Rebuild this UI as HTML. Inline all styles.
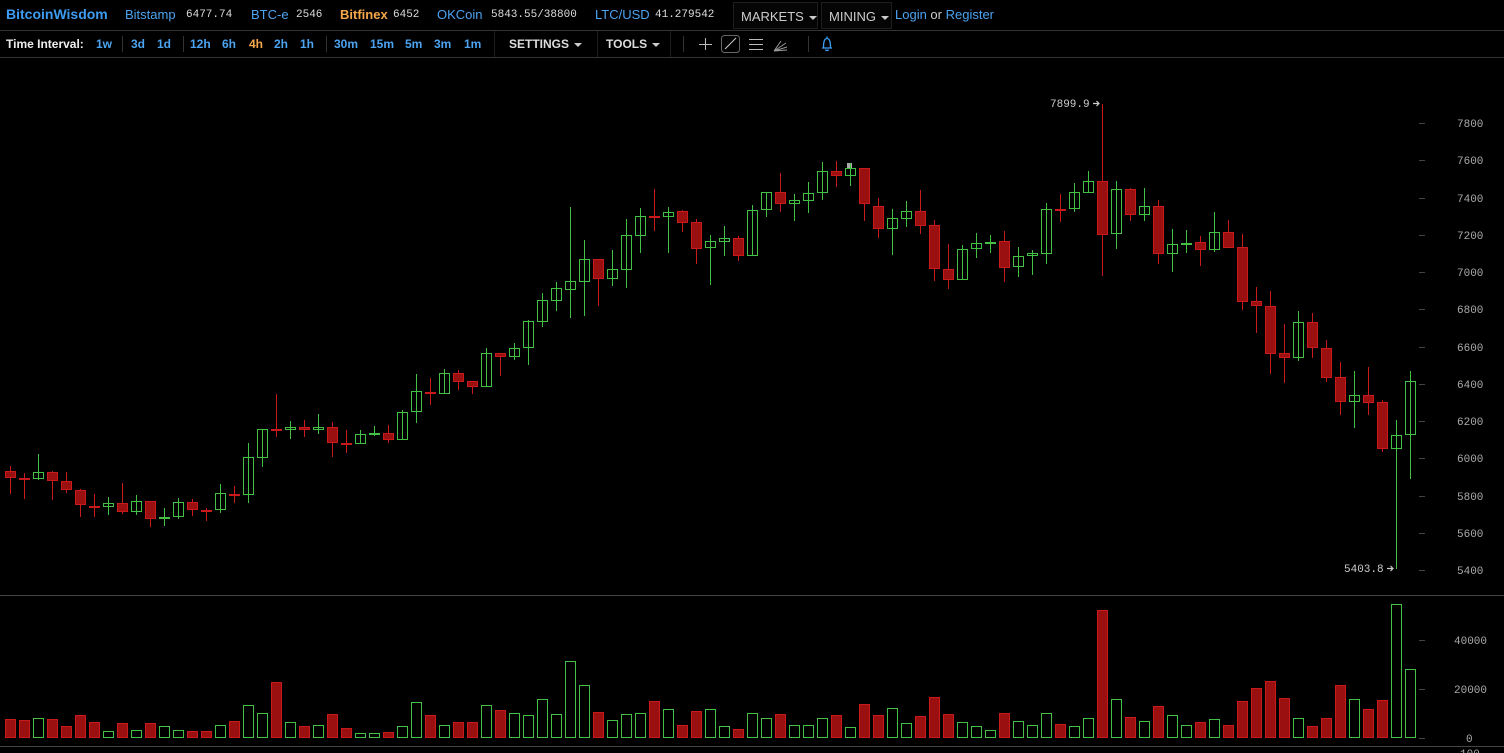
<!DOCTYPE html>
<html><head><meta charset="utf-8"><style>
*{margin:0;padding:0;box-sizing:border-box}
body{width:1504px;height:753px;background:#000;overflow:hidden;position:relative;font-family:"Liberation Sans",Arial,sans-serif;}
.a{position:absolute;white-space:nowrap}
.t1{top:7px;font-size:13px;color:#4ca3f0}
.m{font-family:"Liberation Mono",monospace;font-size:11px;color:#ddd;top:9px}
.t2{top:37px;font-size:12px;font-weight:bold;color:#4ca3f0}
.sep{position:absolute;width:1px;background:#333}
.dd{position:absolute;top:2px;height:27px;border:1px solid #1e1e1e;background:#050505;color:#ccc;font-size:13px;padding:6px 0 0 7px;white-space:nowrap}
.car{display:inline-block;width:0;height:0;border-left:4px solid transparent;border-right:4px solid transparent;border-top:4px solid #ccc;vertical-align:middle;margin-left:5px}
svg{position:absolute;left:0;top:0}
.r line,.r rect{stroke:#c81a1a}
.r rect{fill:#9a1010}
.g line,.g rect{stroke:#44c044}
.g rect{fill:none}
.ax{font-family:"Liberation Mono",monospace;font-size:11px;fill:#aaa}
</style></head><body>
<div class="a" style="left:0;top:30px;width:1504px;height:1px;background:#333"></div>
<div class="a" style="left:0;top:57px;width:1504px;height:1px;background:#333"></div>

<div class="a" style="left:6px;top:6px;font-size:14px;font-weight:bold;color:#3d9cf0">BitcoinWisdom</div>
<div class="a t1" style="left:125px">Bitstamp</div><div class="a m" style="left:186px">6477.74</div>
<div class="a t1" style="left:251px">BTC-e</div><div class="a m" style="left:296px">2546</div>
<div class="a t1" style="left:340px;color:#f5a64a;font-weight:bold">Bitfinex</div><div class="a m" style="left:393px">6452</div>
<div class="a t1" style="left:437px">OKCoin</div><div class="a m" style="left:491px">5843.55/38800</div>
<div class="a t1" style="left:595px">LTC/USD</div><div class="a m" style="left:655px">41.279542</div>
<div class="dd" style="left:733px;width:85px">MARKETS<span class="car"></span></div>
<div class="dd" style="left:821px;width:71px">MINING<span class="car"></span></div>
<div class="a t1" style="left:895px">Login <span style="color:#ccc">or</span> Register</div>

<div class="a t2" style="left:6px;color:#eee">Time Interval:</div>
<div class="a t2" style="left:96px">1w</div>
<div class="sep" style="left:122px;top:36px;height:16px"></div>
<div class="a t2" style="left:131px">3d</div>
<div class="a t2" style="left:157px">1d</div>
<div class="sep" style="left:183px;top:36px;height:16px"></div>
<div class="a t2" style="left:190px">12h</div>
<div class="a t2" style="left:222px">6h</div>
<div class="a t2" style="left:249px;color:#f5a64a">4h</div>
<div class="a t2" style="left:274px">2h</div>
<div class="a t2" style="left:300px">1h</div>
<div class="sep" style="left:326px;top:36px;height:16px"></div>
<div class="a t2" style="left:334px">30m</div>
<div class="a t2" style="left:370px">15m</div>
<div class="a t2" style="left:405px">5m</div>
<div class="a t2" style="left:434px">3m</div>
<div class="a t2" style="left:464px">1m</div>
<div class="sep" style="left:494px;top:31px;height:26px;background:#1e1e1e"></div>
<div class="a t2" style="left:509px;color:#ddd">SETTINGS<span class="car"></span></div>
<div class="sep" style="left:597px;top:31px;height:26px;background:#1e1e1e"></div>
<div class="a t2" style="left:606px;color:#ddd">TOOLS<span class="car"></span></div>
<div class="sep" style="left:670px;top:31px;height:26px;background:#1e1e1e"></div>
<div class="sep" style="left:683px;top:36px;height:16px"></div>
<div class="sep" style="left:808px;top:36px;height:16px"></div>

<svg width="1504" height="753" viewBox="0 0 1504 753">
<g stroke="#bbb" stroke-width="1" fill="none">
<path d="M705.5 38v12M699 44.5h13"/>
<rect x="721.5" y="35.5" width="18" height="17" rx="3" stroke="#666"/>
<path d="M725 49l11-11" stroke="#ccc"/>
<path d="M749 39.5h14M749 44.5h14M749 49.5h14"/>
<path d="M774 51l12-8M774 51l13-4M774 51l13-1M774 51l7-10" stroke="#999"/>
</g>
<path d="M822 48h10M823.5 47.5c0-3 0-9 3.5-9s3.5 6 3.5 9M825.5 49.5a1.6 1.6 0 0 0 3 0M827 36.5v2" stroke="#3d9cf0" stroke-width="1.3" fill="none"/>

<line x1="0" y1="595.5" x2="1504" y2="595.5" stroke="#444"/>
<line x1="0" y1="746.5" x2="1504" y2="746.5" stroke="#444"/>
<g stroke="#444">
<path d="M1419 123.5h6M1419 160.5h6M1419 198.5h6M1419 235.5h6M1419 272.5h6M1419 309.5h6M1419 347.5h6M1419 384.5h6M1419 421.5h6M1419 458.5h6M1419 496.5h6M1419 533.5h6M1419 570.5h6M1419 640.5h6M1419 689.5h6M1419 738.5h6"/>
</g>
<g class="ax">
<text x="1457" y="127">7800</text><text x="1457" y="164">7600</text><text x="1457" y="202">7400</text><text x="1457" y="239">7200</text><text x="1457" y="276">7000</text><text x="1457" y="313">6800</text><text x="1457" y="351">6600</text><text x="1457" y="388">6400</text><text x="1457" y="425">6200</text><text x="1457" y="462">6000</text><text x="1457" y="500">5800</text><text x="1457" y="537">5600</text><text x="1457" y="574">5400</text>
<text x="1454" y="644">40000</text><text x="1454" y="693">20000</text><text x="1466" y="742">0</text><text x="1460" y="757">100</text>
<text x="1050" y="107" fill="#ccc">7899.9</text>
<text x="1344" y="572" fill="#ccc">5403.8</text>
</g>
<g stroke="#ccc" fill="none" stroke-width="1.2">
<path d="M1093 103.5h6M1096.5 101l2.5 2.5-2.5 2.5"/>
<path d="M1387 568.5h6M1390.5 566l2.5 2.5-2.5 2.5"/>
</g>
<rect x="847" y="163" width="5" height="5" fill="#aaa"/>

<g class="r" transform="translate(0,0)"><line x1="10.5" x2="10.5" y1="466" y2="494"/><rect x="5.5" y="471.5" width="10" height="6"/></g>
<g class="r" transform="translate(14,0)"><line x1="10.5" x2="10.5" y1="473" y2="499"/><rect x="5.5" y="478.5" width="10" height="1"/></g>
<g class="g" transform="translate(28,0)"><line x1="10.5" x2="10.5" y1="454" y2="480"/><rect x="5.5" y="472.5" width="10" height="6"/></g>
<g class="r" transform="translate(42,0)"><line x1="10.5" x2="10.5" y1="471" y2="500"/><rect x="5.5" y="472.5" width="10" height="8"/></g>
<g class="r" transform="translate(56,0)"><line x1="10.5" x2="10.5" y1="472" y2="493"/><rect x="5.5" y="481.5" width="10" height="8"/></g>
<g class="r" transform="translate(70,0)"><line x1="10.5" x2="10.5" y1="489" y2="517"/><rect x="5.5" y="490.5" width="10" height="14"/></g>
<g class="r" transform="translate(84,0)"><line x1="10.5" x2="10.5" y1="494" y2="517"/><rect x="5.5" y="506.5" width="10" height="1"/></g>
<g class="g" transform="translate(98,0)"><line x1="10.5" x2="10.5" y1="497" y2="515"/><rect x="5.5" y="503.5" width="10" height="3"/></g>
<g class="r" transform="translate(112,0)"><line x1="10.5" x2="10.5" y1="483" y2="514"/><rect x="5.5" y="503.5" width="10" height="8"/></g>
<g class="g" transform="translate(126,0)"><line x1="10.5" x2="10.5" y1="495" y2="515"/><rect x="5.5" y="501.5" width="10" height="10"/></g>
<g class="r" transform="translate(140,0)"><line x1="10.5" x2="10.5" y1="501" y2="527"/><rect x="5.5" y="501.5" width="10" height="17"/></g>
<g class="g" transform="translate(154,0)"><line x1="10.5" x2="10.5" y1="508" y2="526"/><rect x="5.5" y="517.5" width="10" height="1"/></g>
<g class="g" transform="translate(168,0)"><line x1="10.5" x2="10.5" y1="498" y2="519"/><rect x="5.5" y="502.5" width="10" height="14"/></g>
<g class="r" transform="translate(182,0)"><line x1="10.5" x2="10.5" y1="499" y2="516"/><rect x="5.5" y="502.5" width="10" height="7"/></g>
<g class="r" transform="translate(196,0)"><line x1="10.5" x2="10.5" y1="508" y2="521"/><rect x="5.5" y="510.5" width="10" height="1"/></g>
<g class="g" transform="translate(210,0)"><line x1="10.5" x2="10.5" y1="484" y2="513"/><rect x="5.5" y="493.5" width="10" height="16"/></g>
<g class="r" transform="translate(224,0)"><line x1="10.5" x2="10.5" y1="486" y2="503"/><rect x="5.5" y="494.5" width="10" height="1"/></g>
<g class="g" transform="translate(238,0)"><line x1="10.5" x2="10.5" y1="443" y2="503"/><rect x="5.5" y="457.5" width="10" height="37"/></g>
<g class="g" transform="translate(252,0)"><line x1="10.5" x2="10.5" y1="429" y2="467"/><rect x="5.5" y="429.5" width="10" height="28"/></g>
<g class="r" transform="translate(266,0)"><line x1="10.5" x2="10.5" y1="394" y2="437"/><rect x="5.5" y="429.5" width="10" height="1"/></g>
<g class="g" transform="translate(280,0)"><line x1="10.5" x2="10.5" y1="421" y2="439"/><rect x="5.5" y="427.5" width="10" height="2"/></g>
<g class="r" transform="translate(294,0)"><line x1="10.5" x2="10.5" y1="420" y2="437"/><rect x="5.5" y="427.5" width="10" height="2"/></g>
<g class="g" transform="translate(308,0)"><line x1="10.5" x2="10.5" y1="414" y2="434"/><rect x="5.5" y="427.5" width="10" height="2"/></g>
<g class="r" transform="translate(322,0)"><line x1="10.5" x2="10.5" y1="422" y2="457"/><rect x="5.5" y="427.5" width="10" height="15"/></g>
<g class="r" transform="translate(336,0)"><line x1="10.5" x2="10.5" y1="430" y2="453"/><rect x="5.5" y="443.5" width="10" height="1"/></g>
<g class="g" transform="translate(350,0)"><line x1="10.5" x2="10.5" y1="430" y2="443"/><rect x="5.5" y="434.5" width="10" height="9"/></g>
<g class="g" transform="translate(364,0)"><line x1="10.5" x2="10.5" y1="426" y2="436"/><rect x="5.5" y="433.5" width="10" height="1"/></g>
<g class="r" transform="translate(378,0)"><line x1="10.5" x2="10.5" y1="425" y2="443"/><rect x="5.5" y="433.5" width="10" height="6"/></g>
<g class="g" transform="translate(392,0)"><line x1="10.5" x2="10.5" y1="410" y2="440"/><rect x="5.5" y="412.5" width="10" height="27"/></g>
<g class="g" transform="translate(406,0)"><line x1="10.5" x2="10.5" y1="374" y2="423"/><rect x="5.5" y="391.5" width="10" height="20"/></g>
<g class="r" transform="translate(420,0)"><line x1="10.5" x2="10.5" y1="378" y2="405"/><rect x="5.5" y="392.5" width="10" height="1"/></g>
<g class="g" transform="translate(434,0)"><line x1="10.5" x2="10.5" y1="369" y2="394"/><rect x="5.5" y="373.5" width="10" height="20"/></g>
<g class="r" transform="translate(448,0)"><line x1="10.5" x2="10.5" y1="370" y2="390"/><rect x="5.5" y="373.5" width="10" height="8"/></g>
<g class="r" transform="translate(462,0)"><line x1="10.5" x2="10.5" y1="381" y2="394"/><rect x="5.5" y="381.5" width="10" height="5"/></g>
<g class="g" transform="translate(476,0)"><line x1="10.5" x2="10.5" y1="348" y2="386"/><rect x="5.5" y="353.5" width="10" height="33"/></g>
<g class="r" transform="translate(490,0)"><line x1="10.5" x2="10.5" y1="353" y2="376"/><rect x="5.5" y="353.5" width="10" height="3"/></g>
<g class="g" transform="translate(504,0)"><line x1="10.5" x2="10.5" y1="343" y2="360"/><rect x="5.5" y="348.5" width="10" height="8"/></g>
<g class="g" transform="translate(518,0)"><line x1="10.5" x2="10.5" y1="320" y2="365"/><rect x="5.5" y="321.5" width="10" height="26"/></g>
<g class="g" transform="translate(532,0)"><line x1="10.5" x2="10.5" y1="293" y2="327"/><rect x="5.5" y="300.5" width="10" height="21"/></g>
<g class="g" transform="translate(546,0)"><line x1="10.5" x2="10.5" y1="282" y2="311"/><rect x="5.5" y="288.5" width="10" height="12"/></g>
<g class="g" transform="translate(560,0)"><line x1="10.5" x2="10.5" y1="207" y2="318"/><rect x="5.5" y="281.5" width="10" height="8"/></g>
<g class="g" transform="translate(574,0)"><line x1="10.5" x2="10.5" y1="240" y2="316"/><rect x="5.5" y="259.5" width="10" height="22"/></g>
<g class="r" transform="translate(588,0)"><line x1="10.5" x2="10.5" y1="259" y2="306"/><rect x="5.5" y="259.5" width="10" height="19"/></g>
<g class="g" transform="translate(602,0)"><line x1="10.5" x2="10.5" y1="250" y2="286"/><rect x="5.5" y="269.5" width="10" height="9"/></g>
<g class="g" transform="translate(616,0)"><line x1="10.5" x2="10.5" y1="219" y2="288"/><rect x="5.5" y="235.5" width="10" height="34"/></g>
<g class="g" transform="translate(630,0)"><line x1="10.5" x2="10.5" y1="208" y2="253"/><rect x="5.5" y="216.5" width="10" height="19"/></g>
<g class="r" transform="translate(644,0)"><line x1="10.5" x2="10.5" y1="189" y2="231"/><rect x="5.5" y="216.5" width="10" height="1"/></g>
<g class="g" transform="translate(658,0)"><line x1="10.5" x2="10.5" y1="207" y2="253"/><rect x="5.5" y="212.5" width="10" height="4"/></g>
<g class="r" transform="translate(672,0)"><line x1="10.5" x2="10.5" y1="210" y2="232"/><rect x="5.5" y="211.5" width="10" height="11"/></g>
<g class="r" transform="translate(686,0)"><line x1="10.5" x2="10.5" y1="219" y2="264"/><rect x="5.5" y="222.5" width="10" height="26"/></g>
<g class="g" transform="translate(700,0)"><line x1="10.5" x2="10.5" y1="235" y2="285"/><rect x="5.5" y="241.5" width="10" height="6"/></g>
<g class="g" transform="translate(714,0)"><line x1="10.5" x2="10.5" y1="226" y2="256"/><rect x="5.5" y="238.5" width="10" height="3"/></g>
<g class="r" transform="translate(728,0)"><line x1="10.5" x2="10.5" y1="236" y2="261"/><rect x="5.5" y="238.5" width="10" height="17"/></g>
<g class="g" transform="translate(742,0)"><line x1="10.5" x2="10.5" y1="205" y2="255"/><rect x="5.5" y="210.5" width="10" height="45"/></g>
<g class="g" transform="translate(756,0)"><line x1="10.5" x2="10.5" y1="192" y2="217"/><rect x="5.5" y="192.5" width="10" height="17"/></g>
<g class="r" transform="translate(770,0)"><line x1="10.5" x2="10.5" y1="173" y2="212"/><rect x="5.5" y="192.5" width="10" height="11"/></g>
<g class="g" transform="translate(784,0)"><line x1="10.5" x2="10.5" y1="194" y2="221"/><rect x="5.5" y="200.5" width="10" height="3"/></g>
<g class="g" transform="translate(798,0)"><line x1="10.5" x2="10.5" y1="182" y2="213"/><rect x="5.5" y="193.5" width="10" height="7"/></g>
<g class="g" transform="translate(812,0)"><line x1="10.5" x2="10.5" y1="162" y2="200"/><rect x="5.5" y="171.5" width="10" height="21"/></g>
<g class="r" transform="translate(826,0)"><line x1="10.5" x2="10.5" y1="161" y2="187"/><rect x="5.5" y="171.5" width="10" height="4"/></g>
<g class="g" transform="translate(840,0)"><line x1="10.5" x2="10.5" y1="163" y2="186"/><rect x="5.5" y="168.5" width="10" height="7"/></g>
<g class="r" transform="translate(854,0)"><line x1="10.5" x2="10.5" y1="168" y2="221"/><rect x="5.5" y="168.5" width="10" height="35"/></g>
<g class="r" transform="translate(868,0)"><line x1="10.5" x2="10.5" y1="198" y2="238"/><rect x="5.5" y="206.5" width="10" height="22"/></g>
<g class="g" transform="translate(882,0)"><line x1="10.5" x2="10.5" y1="209" y2="255"/><rect x="5.5" y="218.5" width="10" height="10"/></g>
<g class="g" transform="translate(896,0)"><line x1="10.5" x2="10.5" y1="201" y2="227"/><rect x="5.5" y="211.5" width="10" height="7"/></g>
<g class="r" transform="translate(910,0)"><line x1="10.5" x2="10.5" y1="190" y2="234"/><rect x="5.5" y="211.5" width="10" height="14"/></g>
<g class="r" transform="translate(924,0)"><line x1="10.5" x2="10.5" y1="220" y2="281"/><rect x="5.5" y="225.5" width="10" height="43"/></g>
<g class="r" transform="translate(938,0)"><line x1="10.5" x2="10.5" y1="244" y2="289"/><rect x="5.5" y="269.5" width="10" height="10"/></g>
<g class="g" transform="translate(952,0)"><line x1="10.5" x2="10.5" y1="245" y2="279"/><rect x="5.5" y="249.5" width="10" height="30"/></g>
<g class="g" transform="translate(966,0)"><line x1="10.5" x2="10.5" y1="233" y2="258"/><rect x="5.5" y="243.5" width="10" height="5"/></g>
<g class="g" transform="translate(980,0)"><line x1="10.5" x2="10.5" y1="235" y2="253"/><rect x="5.5" y="242.5" width="10" height="1"/></g>
<g class="r" transform="translate(994,0)"><line x1="10.5" x2="10.5" y1="231" y2="282"/><rect x="5.5" y="241.5" width="10" height="26"/></g>
<g class="g" transform="translate(1008,0)"><line x1="10.5" x2="10.5" y1="247" y2="277"/><rect x="5.5" y="256.5" width="10" height="10"/></g>
<g class="g" transform="translate(1022,0)"><line x1="10.5" x2="10.5" y1="250" y2="275"/><rect x="5.5" y="253.5" width="10" height="2"/></g>
<g class="g" transform="translate(1036,0)"><line x1="10.5" x2="10.5" y1="203" y2="264"/><rect x="5.5" y="209.5" width="10" height="44"/></g>
<g class="r" transform="translate(1050,0)"><line x1="10.5" x2="10.5" y1="194" y2="222"/><rect x="5.5" y="209.5" width="10" height="1"/></g>
<g class="g" transform="translate(1064,0)"><line x1="10.5" x2="10.5" y1="183" y2="212"/><rect x="5.5" y="192.5" width="10" height="16"/></g>
<g class="g" transform="translate(1078,0)"><line x1="10.5" x2="10.5" y1="171" y2="193"/><rect x="5.5" y="181.5" width="10" height="11"/></g>
<g class="r" transform="translate(1092,0)"><line x1="10.5" x2="10.5" y1="104" y2="276"/><rect x="5.5" y="181.5" width="10" height="53"/></g>
<g class="g" transform="translate(1106,0)"><line x1="10.5" x2="10.5" y1="181" y2="249"/><rect x="5.5" y="189.5" width="10" height="44"/></g>
<g class="r" transform="translate(1120,0)"><line x1="10.5" x2="10.5" y1="188" y2="221"/><rect x="5.5" y="189.5" width="10" height="25"/></g>
<g class="g" transform="translate(1134,0)"><line x1="10.5" x2="10.5" y1="188" y2="221"/><rect x="5.5" y="206.5" width="10" height="8"/></g>
<g class="r" transform="translate(1148,0)"><line x1="10.5" x2="10.5" y1="200" y2="264"/><rect x="5.5" y="206.5" width="10" height="47"/></g>
<g class="g" transform="translate(1162,0)"><line x1="10.5" x2="10.5" y1="229" y2="272"/><rect x="5.5" y="244.5" width="10" height="9"/></g>
<g class="g" transform="translate(1176,0)"><line x1="10.5" x2="10.5" y1="230" y2="253"/><rect x="5.5" y="243.5" width="10" height="1"/></g>
<g class="r" transform="translate(1190,0)"><line x1="10.5" x2="10.5" y1="236" y2="266"/><rect x="5.5" y="242.5" width="10" height="7"/></g>
<g class="g" transform="translate(1204,0)"><line x1="10.5" x2="10.5" y1="212" y2="252"/><rect x="5.5" y="232.5" width="10" height="17"/></g>
<g class="r" transform="translate(1218,0)"><line x1="10.5" x2="10.5" y1="220" y2="248"/><rect x="5.5" y="232.5" width="10" height="15"/></g>
<g class="r" transform="translate(1232,0)"><line x1="10.5" x2="10.5" y1="234" y2="310"/><rect x="5.5" y="247.5" width="10" height="54"/></g>
<g class="r" transform="translate(1246,0)"><line x1="10.5" x2="10.5" y1="287" y2="333"/><rect x="5.5" y="301.5" width="10" height="4"/></g>
<g class="r" transform="translate(1260,0)"><line x1="10.5" x2="10.5" y1="291" y2="374"/><rect x="5.5" y="306.5" width="10" height="47"/></g>
<g class="r" transform="translate(1274,0)"><line x1="10.5" x2="10.5" y1="324" y2="383"/><rect x="5.5" y="353.5" width="10" height="4"/></g>
<g class="g" transform="translate(1288,0)"><line x1="10.5" x2="10.5" y1="311" y2="361"/><rect x="5.5" y="322.5" width="10" height="35"/></g>
<g class="r" transform="translate(1302,0)"><line x1="10.5" x2="10.5" y1="313" y2="358"/><rect x="5.5" y="322.5" width="10" height="25"/></g>
<g class="r" transform="translate(1316,0)"><line x1="10.5" x2="10.5" y1="340" y2="382"/><rect x="5.5" y="348.5" width="10" height="29"/></g>
<g class="r" transform="translate(1330,0)"><line x1="10.5" x2="10.5" y1="362" y2="415"/><rect x="5.5" y="377.5" width="10" height="24"/></g>
<g class="g" transform="translate(1344,0)"><line x1="10.5" x2="10.5" y1="371" y2="428"/><rect x="5.5" y="395.5" width="10" height="6"/></g>
<g class="r" transform="translate(1358,0)"><line x1="10.5" x2="10.5" y1="367" y2="415"/><rect x="5.5" y="395.5" width="10" height="7"/></g>
<g class="r" transform="translate(1372,0)"><line x1="10.5" x2="10.5" y1="400" y2="452"/><rect x="5.5" y="402.5" width="10" height="46"/></g>
<g class="g" transform="translate(1386,0)"><line x1="10.5" x2="10.5" y1="420" y2="569"/><rect x="5.5" y="435.5" width="10" height="13"/></g>
<g class="g" transform="translate(1400,0)"><line x1="10.5" x2="10.5" y1="371" y2="479"/><rect x="5.5" y="381.5" width="10" height="53"/></g>

<g class="r"><rect x="5.5" y="719.5" width="10" height="18"/><rect x="19.5" y="720.5" width="10" height="17"/><rect x="47.5" y="719.5" width="10" height="18"/><rect x="61.5" y="726.5" width="10" height="11"/><rect x="75.5" y="715.5" width="10" height="22"/><rect x="89.5" y="722.5" width="10" height="15"/><rect x="117.5" y="723.5" width="10" height="14"/><rect x="145.5" y="723.5" width="10" height="14"/><rect x="187.5" y="731.5" width="10" height="6"/><rect x="201.5" y="731.5" width="10" height="6"/><rect x="229.5" y="721.5" width="10" height="16"/><rect x="271.5" y="682.5" width="10" height="55"/><rect x="299.5" y="726.5" width="10" height="11"/><rect x="327.5" y="714.5" width="10" height="23"/><rect x="341.5" y="728.5" width="10" height="9"/><rect x="383.5" y="732.5" width="10" height="5"/><rect x="425.5" y="715.5" width="10" height="22"/><rect x="453.5" y="722.5" width="10" height="15"/><rect x="467.5" y="722.5" width="10" height="15"/><rect x="495.5" y="710.5" width="10" height="27"/><rect x="593.5" y="712.5" width="10" height="25"/><rect x="649.5" y="701.5" width="10" height="36"/><rect x="677.5" y="725.5" width="10" height="12"/><rect x="691.5" y="711.5" width="10" height="26"/><rect x="733.5" y="729.5" width="10" height="8"/><rect x="775.5" y="714.5" width="10" height="23"/><rect x="831.5" y="715.5" width="10" height="22"/><rect x="859.5" y="704.5" width="10" height="33"/><rect x="873.5" y="715.5" width="10" height="22"/><rect x="915.5" y="716.5" width="10" height="21"/><rect x="929.5" y="697.5" width="10" height="40"/><rect x="943.5" y="714.5" width="10" height="23"/><rect x="999.5" y="713.5" width="10" height="24"/><rect x="1055.5" y="724.5" width="10" height="13"/><rect x="1097.5" y="610.5" width="10" height="127"/><rect x="1125.5" y="717.5" width="10" height="20"/><rect x="1153.5" y="706.5" width="10" height="31"/><rect x="1195.5" y="722.5" width="10" height="15"/><rect x="1223.5" y="725.5" width="10" height="12"/><rect x="1237.5" y="701.5" width="10" height="36"/><rect x="1251.5" y="688.5" width="10" height="49"/><rect x="1265.5" y="681.5" width="10" height="56"/><rect x="1279.5" y="698.5" width="10" height="39"/><rect x="1307.5" y="726.5" width="10" height="11"/><rect x="1321.5" y="718.5" width="10" height="19"/><rect x="1335.5" y="685.5" width="10" height="52"/><rect x="1363.5" y="709.5" width="10" height="28"/><rect x="1377.5" y="700.5" width="10" height="37"/></g>
<g class="g"><rect x="33.5" y="718.5" width="10" height="19"/><rect x="103.5" y="731.5" width="10" height="6"/><rect x="131.5" y="730.5" width="10" height="7"/><rect x="159.5" y="726.5" width="10" height="11"/><rect x="173.5" y="730.5" width="10" height="7"/><rect x="215.5" y="725.5" width="10" height="12"/><rect x="243.5" y="705.5" width="10" height="32"/><rect x="257.5" y="713.5" width="10" height="24"/><rect x="285.5" y="722.5" width="10" height="15"/><rect x="313.5" y="725.5" width="10" height="12"/><rect x="355.5" y="733.5" width="10" height="4"/><rect x="369.5" y="733.5" width="10" height="4"/><rect x="397.5" y="726.5" width="10" height="11"/><rect x="411.5" y="702.5" width="10" height="35"/><rect x="439.5" y="725.5" width="10" height="12"/><rect x="481.5" y="705.5" width="10" height="32"/><rect x="509.5" y="713.5" width="10" height="24"/><rect x="523.5" y="715.5" width="10" height="22"/><rect x="537.5" y="699.5" width="10" height="38"/><rect x="551.5" y="714.5" width="10" height="23"/><rect x="565.5" y="661.5" width="10" height="76"/><rect x="579.5" y="685.5" width="10" height="52"/><rect x="607.5" y="720.5" width="10" height="17"/><rect x="621.5" y="714.5" width="10" height="23"/><rect x="635.5" y="713.5" width="10" height="24"/><rect x="663.5" y="709.5" width="10" height="28"/><rect x="705.5" y="709.5" width="10" height="28"/><rect x="719.5" y="726.5" width="10" height="11"/><rect x="747.5" y="713.5" width="10" height="24"/><rect x="761.5" y="718.5" width="10" height="19"/><rect x="789.5" y="725.5" width="10" height="12"/><rect x="803.5" y="725.5" width="10" height="12"/><rect x="817.5" y="718.5" width="10" height="19"/><rect x="845.5" y="727.5" width="10" height="10"/><rect x="887.5" y="708.5" width="10" height="29"/><rect x="901.5" y="723.5" width="10" height="14"/><rect x="957.5" y="722.5" width="10" height="15"/><rect x="971.5" y="726.5" width="10" height="11"/><rect x="985.5" y="730.5" width="10" height="7"/><rect x="1013.5" y="721.5" width="10" height="16"/><rect x="1027.5" y="725.5" width="10" height="12"/><rect x="1041.5" y="713.5" width="10" height="24"/><rect x="1069.5" y="726.5" width="10" height="11"/><rect x="1083.5" y="718.5" width="10" height="19"/><rect x="1111.5" y="699.5" width="10" height="38"/><rect x="1139.5" y="721.5" width="10" height="16"/><rect x="1167.5" y="715.5" width="10" height="22"/><rect x="1181.5" y="725.5" width="10" height="12"/><rect x="1209.5" y="719.5" width="10" height="18"/><rect x="1293.5" y="718.5" width="10" height="19"/><rect x="1349.5" y="699.5" width="10" height="38"/><rect x="1391.5" y="604.5" width="10" height="133"/><rect x="1405.5" y="669.5" width="10" height="68"/></g>
</svg>
</body></html>
